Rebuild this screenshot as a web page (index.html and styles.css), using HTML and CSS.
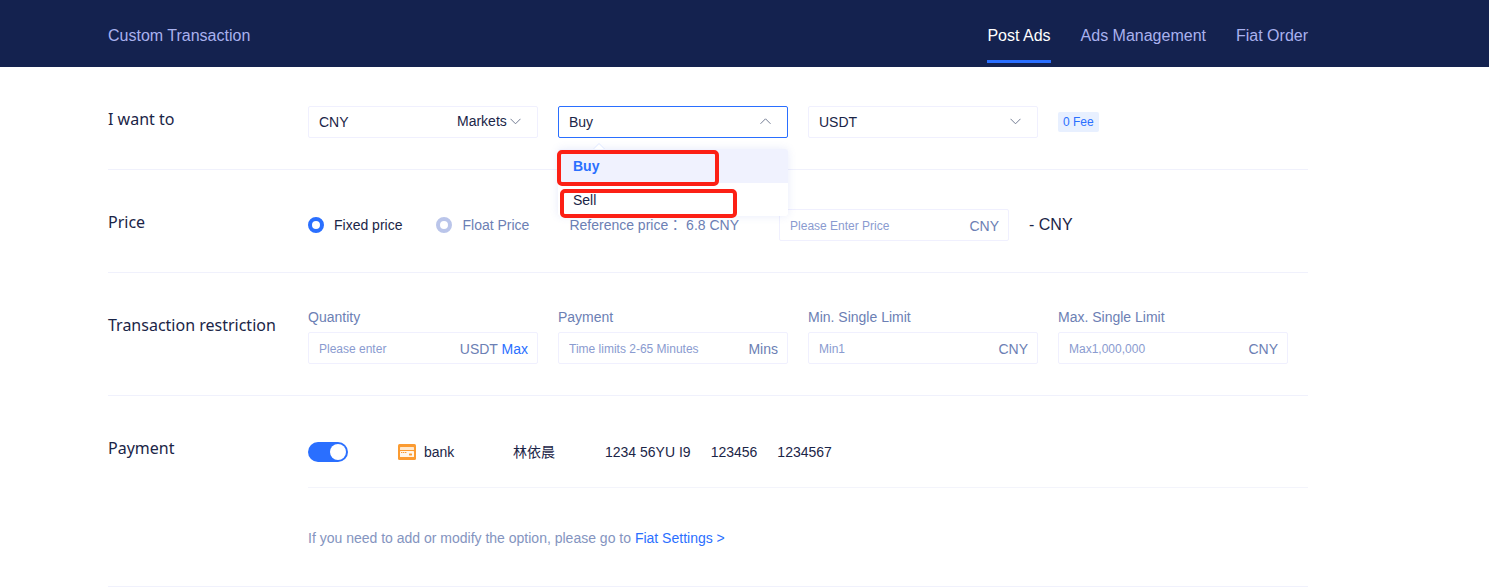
FILE: index.html
```html
<!DOCTYPE html>
<html lang="en">
<head>
<meta charset="utf-8">
<meta name="viewport" content="width=device-width, initial-scale=1">
<title>Custom Transaction</title>
<link rel="stylesheet" href="styles.css">
</head>
<body>
<header class="topbar">
  <div class="wrap topbar-inner">
    <a class="brand" href="#">Custom Transaction</a>
    <nav class="nav">
      <a class="nav-link active" href="#" aria-current="page">Post Ads</a>
      <a class="nav-link" href="#">Ads Management</a>
      <a class="nav-link" href="#">Fiat Order</a>
    </nav>
  </div>
</header>
<main class="wrap">
  <section class="row">
    <h2 class="title">I want to</h2>
    <div class="controls">
      <div class="field">
        <input class="field-text" type="text" value="CNY" aria-label="Currency">
        <span class="select-box">
          <select class="market" aria-label="Markets"><option>Markets</option></select>
          <svg class="chevron" viewBox="0 0 11 7"><path d="M.5 .8 5.5 5.8 10.5 .8"/></svg>
        </span>
      </div>
      <div class="dropdown">
        <button class="field field-open" type="button" aria-haspopup="listbox" aria-expanded="true">
          <span>Buy</span>
          <svg class="chevron chevron-end" viewBox="0 0 11 7"><path d="M.5 5.8 5.5 .8 10.5 5.8"/></svg>
        </button>
        <div class="menu">
          <svg class="menu-arrow" viewBox="0 0 12 6"><path d="M.5 6 6 .5 11.5 6"/></svg>
          <ul class="menu-list" role="listbox" aria-label="Side">
            <li class="option selected" role="option" aria-selected="true">Buy</li>
            <li class="option" role="option" aria-selected="false">Sell</li>
          </ul>
          <span class="mark mark-buy"></span>
          <span class="mark mark-sell"></span>
        </div>
      </div>
      <div class="field">
        <select class="field-select" aria-label="Coin"><option>USDT</option></select>
        <svg class="chevron chevron-end" viewBox="0 0 11 7"><path d="M.5 .8 5.5 5.8 10.5 .8"/></svg>
      </div>
      <span class="badge">0 Fee</span>
    </div>
  </section>

  <section class="row">
    <h2 class="title">Price</h2>
    <div class="controls price">
      <div class="radios">
        <label class="radio"><input type="radio" name="price" checked><span>Fixed price</span></label>
        <label class="radio"><input type="radio" name="price"><span>Float Price</span></label>
      </div>
      <span class="reference">Reference price： 6.8 CNY</span>
      <div class="field">
        <input class="field-text" type="text" placeholder="Please Enter Price" aria-label="Price">
        <span class="unit">CNY</span>
      </div>
      <span class="total">- CNY</span>
    </div>
  </section>

  <section class="row">
    <h2 class="title">Transaction restriction</h2>
    <div class="controls labelled">
      <div class="group">
        <label class="label" for="quantity">Quantity</label>
        <div class="field">
          <input class="field-text" id="quantity" type="text" placeholder="Please enter">
          <span class="unit">USDT <button class="max" type="button">Max</button></span>
        </div>
      </div>
      <div class="group">
        <label class="label" for="time">Payment</label>
        <div class="field">
          <input class="field-text" id="time" type="text" placeholder="Time limits 2-65 Minutes">
          <span class="unit">Mins</span>
        </div>
      </div>
      <div class="group">
        <label class="label" for="min">Min. Single Limit</label>
        <div class="field">
          <input class="field-text" id="min" type="text" placeholder="Min1">
          <span class="unit">CNY</span>
        </div>
      </div>
      <div class="group">
        <label class="label" for="max">Max. Single Limit</label>
        <div class="field">
          <input class="field-text" id="max" type="text" placeholder="Max1,000,000">
          <span class="unit">CNY</span>
        </div>
      </div>
    </div>
  </section>

  <section class="row">
    <h2 class="title">Payment</h2>
    <div class="payment">
      <div class="account">
        <input class="switch" type="checkbox" role="switch" id="bank" checked>
        <label class="bank" for="bank">
          <svg class="card" viewBox="0 0 18 16">
            <rect width="18" height="16" rx="1.5" fill="#fb9b31"/>
            <rect x="2" y="3" width="14" height="3" rx=".6" fill="#ffe9cf"/>
            <rect x="2" y="7" width="14" height="6" rx=".6" fill="#fff6ea"/>
            <path d="M3 8.5h6" stroke="#fb9b31" stroke-dasharray="1.4 .6" fill="none"/>
            <rect x="11" y="9.5" width="3" height="2" rx=".4" fill="#fb9b31"/>
          </svg>
          bank
        </label>
        <span class="holder">林依晨</span>
        <span class="details"><span>1234 56YU I9</span><span>123456</span><span>1234567</span></span>
      </div>
      <p class="hint">If you need to add or modify the option, please go to <a href="#">Fiat Settings &gt;</a></p>
    </div>
  </section>
</main>
</body>
</html>
```
FILE: styles.css
```css
* {
  box-sizing: border-box;
}

body {
  margin: 0;
  background: #fff;
  color: #1b2547;
  font: 14px/20px "Liberation Sans", Arial, "Noto Sans CJK SC", sans-serif;
}

a {
  text-decoration: none;
}

input,
select,
button {
  margin: 0;
  padding: 0;
  border: 0;
  background: none;
  color: inherit;
  font: inherit;
}

select {
  appearance: none;
}

.wrap {
  max-width: 1308px;
  padding-left: 108px;
}

.topbar {
  height: 67px;
  background: #14224f;
  font-size: 16px;
}

.topbar-inner {
  display: flex;
  justify-content: space-between;
}

.brand,
.nav-link {
  color: #a9b1ee;
  line-height: 24px;
  padding-top: 24px;
}

.nav {
  display: flex;
  gap: 30px;
}

.nav-link {
  height: 63px;
}

.nav-link.active {
  border-bottom: 3px solid #2a6fff;
  color: #fff;
}

.row {
  display: flex;
  border-bottom: 1px solid #f0f1fc;
}

.title {
  flex: 0 0 200px;
  margin: 0;
  padding-top: 40px;
  font: 400 16px/24px "Noto Sans", "Open Sans", sans-serif;
}

.controls {
  display: flex;
  flex: 1;
  align-items: center;
  gap: 20px;
  padding: 39px 0 31px;
}

.controls.labelled {
  padding-top: 34px;
}

.group {
  display: grid;
  gap: 5px;
}

.label,
.unit,
.reference {
  color: #6c80b4;
}

.reference {
  font-family: "Liberation Sans", Arial, "Noto Sans CJK TC", sans-serif;
}

.field {
  display: flex;
  align-items: center;
  justify-content: space-between;
  width: 230px;
  height: 32px;
  padding: 0 9px 0 10px;
  border: 1px solid #f0f0fe;
  border-radius: 2px;
  background: #fff;
}

.field-text {
  flex: 1;
  min-width: 0;
  height: 30px;
}

.field-text::placeholder {
  color: #8a9bd0;
  font-size: 12px;
  opacity: 1;
}

.field-select {
  flex: 1;
  height: 30px;
}

.unit {
  padding-top: 2px;
}

.field-open {
  border-color: #2a6fff;
}

.select-box {
  display: flex;
  align-items: center;
  gap: 3px;
  padding: 0 7px 2px 0;
}

.chevron {
  width: 11px;
  height: 7px;
  fill: none;
  stroke: #747d94;
}

.chevron-end {
  margin: 0 7px 2px 0;
}

.dropdown {
  position: relative;
}

.menu {
  position: absolute;
  z-index: 2;
  top: 43px;
  left: 0;
  width: 100%;
}

.menu-list {
  margin: 0;
  padding: 0;
  overflow: hidden;
  border-radius: 3px;
  background: #fff;
  box-shadow: 0 0 8px rgba(90, 110, 220, 0.14);
  list-style: none;
}

.menu-arrow {
  position: absolute;
  top: -6px;
  left: 35px;
  width: 12px;
  height: 6px;
  fill: #fff;
  stroke: #dce6ff;
}

.option {
  height: 33px;
  padding-left: 15px;
  line-height: 34px;
}

.option.selected {
  height: 34px;
  background: #f0f2fe;
  color: #2a6fff;
  font-weight: 700;
}

.mark {
  position: absolute;
  border: 4px solid #fc2015;
  border-radius: 5px;
}

.mark-buy {
  top: 1px;
  left: -1px;
  width: 162px;
  height: 36px;
}

.mark-sell {
  top: 40px;
  left: 2px;
  width: 177px;
  height: 29px;
}

.badge {
  padding: 0 5px;
  border-radius: 2px;
  background: #e8f0ff;
  color: #2a6fff;
  font-size: 12px;
}

.price {
  gap: 40px;
}

.radios {
  display: flex;
  gap: 34px;
}

.radio {
  display: flex;
  align-items: center;
  gap: 10px;
  color: #6c80b4;
}

.radio:has(:checked) {
  color: inherit;
}

.radio input {
  width: 16px;
  height: 16px;
  border: 4px solid #bac5ea;
  border-radius: 50%;
  appearance: none;
}

.radio input:checked {
  border-color: #2a6fff;
}

.total {
  margin-left: -20px;
  font-size: 16px;
}

.max {
  color: #2a6fff;
}

.payment {
  flex: 1;
}

.account {
  display: flex;
  align-items: center;
  padding: 46px 0 25px;
  border-bottom: 1px solid #f3f4fb;
}

.switch {
  display: flex;
  justify-content: flex-end;
  width: 40px;
  height: 20px;
  padding: 2px;
  border-radius: 10px;
  background: #bac5ea;
  appearance: none;
}

.switch:checked {
  background: #2a6fff;
}

.switch::before {
  width: 16px;
  height: 16px;
  border-radius: 50%;
  background: #fff;
  content: "";
}

.bank {
  display: flex;
  align-items: center;
  gap: 8px;
  width: 115px;
  margin-left: 50px;
}

.card {
  width: 18px;
  height: 16px;
}

.holder {
  width: 92px;
}

.details {
  display: flex;
  gap: 20px;
}

.hint {
  margin: 0;
  padding: 40px 0 38px;
  color: #8494c0;
}

.hint a {
  color: #2a6fff;
}
```
